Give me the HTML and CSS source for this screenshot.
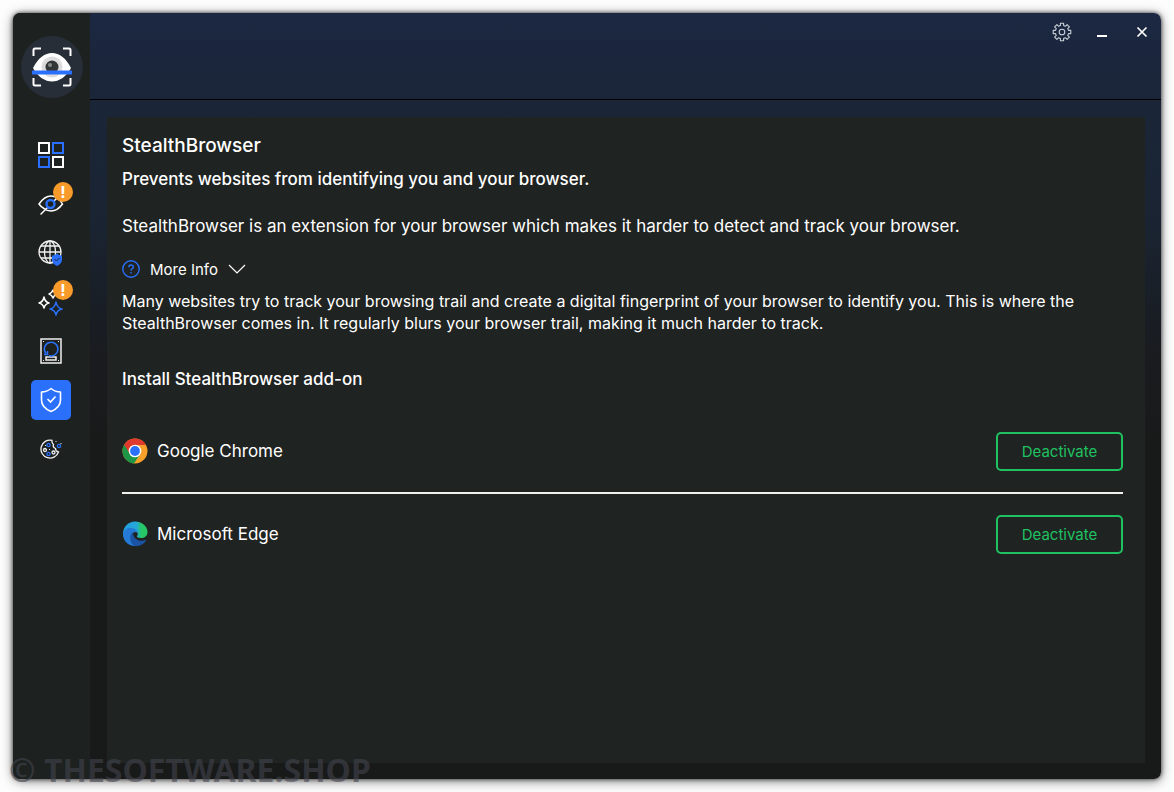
FILE: index.html
```html
<!DOCTYPE html>
<html lang="en">
<head>
    <meta charset="utf-8">
    <title>StealthBrowser</title>
    <meta name="viewport" content="width=device-width, initial-scale=1.0">
    <link rel="stylesheet" href="styles.css">
</head>
<body>
    <div class="window">
        <aside class="sidebar">
            <div class="logo">
                <svg width="40" height="40" viewBox="0 0 40 40" fill="none">
                    <path d="M1.5 9V3q0-1.500 1.500-1.500h6M31 1.500h6q1.500 0 1.500 1.500v6M38.500 31v6q0 1.500-1.500 1.500h-6M9 38.500H3q-1.500 0-1.500-1.500v-6" stroke="#fff" stroke-width="2"/>
                    <path d="M1 21C6 11 13 6 20 6s14 5 19 15c-5 9-12 13.500-19 13.500S6 30 1 21z" fill="#fff"/>
                    <circle cx="20" cy="20" r="10.500" fill="#dcdcdc"/>
                    <circle cx="20" cy="20" r="6.500" fill="#333637"/>
                    <circle cx="18" cy="18" r="2" fill="#858989"/>
                    <path d="M1 25.500h38" stroke="#2a70fb" stroke-width="4" stroke-linecap="round"/>
                </svg>
            </div>
            <nav class="menu">
                <button class="menu-item" aria-label="Dashboard">
                    <svg width="26" height="26" viewBox="0 0 26 26" fill="none" stroke-width="2">
                        <path d="M1 1h10v10H1zM15 15h10v10H15z" stroke="#fff"/>
                        <path d="M15 1h10v10H15zM1 15h10v10H1z" stroke="#2a70fb"/>
                    </svg>
                </button>
                <button class="menu-item" aria-label="Privacy">
                    <svg width="26" height="22" viewBox="0 0 26 22" fill="none" stroke-linecap="round">
                        <path d="M1 11q5.500-8 12-8 7 0 11.500 8-5 7-11.500 7-4 0-7-2.500Q3 14 1 11zM3 21l6-6M16 8l5-5" stroke="#fff" stroke-width="1.500"/>
                        <circle cx="12.500" cy="11" r="4" stroke="#2a70fb" stroke-width="2.400"/>
                    </svg>
                    <span class="badge">!</span>
                </button>
                <button class="menu-item" aria-label="Web protection">
                    <svg width="26" height="26" viewBox="0 0 26 26" fill="none">
                        <g stroke="#f2f2f2" stroke-width="1.300">
                            <circle cx="12" cy="12" r="11"/>
                            <ellipse cx="12" cy="12" rx="5.500" ry="11"/>
                            <path d="M12 1v22M1 12h22M3 6h18M3 18h18"/>
                        </g>
                        <path d="M14 15.500q3 0 5-2 2 2 5 2v4q0 4-5 6.500-5-2.500-5-6.500z" fill="#2a70fb"/>
                        <path d="m16.500 19 2 2 3-3" stroke="#1b2638"/>
                    </svg>
                </button>
                <button class="menu-item" aria-label="Clean up">
                    <svg width="26" height="28" viewBox="0 0 26 28" fill="none" stroke-width="1.500" stroke-linejoin="round">
                        <path d="M6 9q1 5 5 6-4 1-5 5-1-4-5-5 4-1 5-6zM15 2q1 3 4 4-3 1-4 4-1-3-4-4 3-1 4-4z" stroke="#fff"/>
                        <path d="M18 14q1 6 6 7-5 1-6 6-1-5-6-6 5-1 6-7z" stroke="#2a70fb"/>
                    </svg>
                    <span class="badge">!</span>
                </button>
                <button class="menu-item" aria-label="Disk">
                    <svg width="22" height="26" viewBox="0 0 22 26" fill="none">
                        <path d="M1 1h20v24H1zM6 19h10v3H6z" stroke="#eee" stroke-width="1.500"/>
                        <path d="M6 15.500A6.800 6.800 0 1 1 9 17.500M4 16.500h3.500V13" stroke="#2a70fb" stroke-width="1.500"/>
                        <path d="M3 3h1v1H3zM18 3h1v1h-1zM3 22h1v1H3zM18 22h1v1h-1z" fill="#eee"/>
                    </svg>
                </button>
                <button class="menu-item active" aria-label="StealthBrowser">
                    <svg width="22" height="26" viewBox="0 0 22 26" fill="none" stroke="#fff">
                        <path d="M11 1.500Q7 5 1.500 5v8q0 7.500 9.500 11.500 9.500-4 9.500-11.500V5Q15 5 11 1.500z" stroke-width="1.600" stroke-linejoin="round"/>
                        <path d="m7.500 12 3 3 5-5.500" stroke-width="1.600"/>
                    </svg>
                </button>
                <button class="menu-item" aria-label="Cookies">
                    <svg width="22" height="20" viewBox="0 0 22 20" fill="none" stroke-width="1.300">
                        <path d="M12 1.300A9 9 0 1 0 18.500 13q-3-.5-3-3.500-3-1-2-4-2-1.500-1.500-4.200z" stroke="#f2f2f2"/>
                        <g stroke="#f2f2f2"><circle cx="5" cy="11" r="1.500"/><circle cx="13.500" cy="13.500" r="1.500"/></g>
                        <g stroke="#2a70fb"><circle cx="8.500" cy="6" r="1.600"/><circle cx="8.500" cy="15" r="1.600"/><circle cx="19" cy="7" r="1.600"/></g>
                        <path d="M15.500 2h1v1h-1zM20.500 4h1v1h-1zM9 10h1v1H9zM5 6h1v1H5z" fill="#f2f2f2"/>
                    </svg>
                </button>
            </nav>
        </aside>
        <div class="main">
            <header class="titlebar">
                <button class="window-button" aria-label="Settings">
                    <svg width="20" height="20" viewBox="0 0 20 20" fill="none" stroke="#c9d0d8" stroke-width="1.100" stroke-linejoin="round">
                        <path d="M8.400 1.200h3.200v2.300l1.800.8 1.700-1.700 2.300 2.300-1.700 1.700.8 1.800h2.300v3.200h-2.300l-.8 1.800 1.700 1.700-2.300 2.300-1.700-1.700-1.800.8v2.300H8.400v-2.300l-1.800-.8-1.700 1.700-2.300-2.300 1.700-1.700-.8-1.800H1.200V8.400h2.300l.8-1.800-1.700-1.700 2.300-2.300 1.700 1.700 1.800-.8z"/>
                        <circle cx="10" cy="10" r="2.800"/>
                    </svg>
                </button>
                <button class="window-button" aria-label="Minimize">
                    <svg width="20" height="20" viewBox="0 0 20 20"><path d="M5 14h10" stroke="#fff" stroke-width="2"/></svg>
                </button>
                <button class="window-button" aria-label="Close">
                    <svg width="20" height="20" viewBox="0 0 20 20"><path d="m5.500 5.500 9 9m0-9-9 9" stroke="#fff" stroke-width="1.700"/></svg>
                </button>
            </header>
            <main class="panel">
                <h1>StealthBrowser</h1>
                <h2 class="subtitle">Prevents websites from identifying you and your browser.</h2>
                <p class="description">StealthBrowser is an extension for your browser which makes it harder to detect and track your browser.</p>
                <button class="more-info">
                    <svg width="18" height="18" viewBox="0 0 18 18" fill="none" stroke="#2a70fb" stroke-width="1.400">
                        <circle cx="9" cy="9" r="8.200"/>
                        <path d="M6.800 7.300q0-2.300 2.200-2.300 2.300 0 2.300 2 0 1.200-1.300 1.800-1 .5-1 1.900M9 12v1.500"/>
                    </svg>
                    <span>More Info</span>
                    <svg width="18" height="10" viewBox="0 0 18 10" fill="none" stroke="#fff" stroke-width="1.200"><path d="m1 1 8 8 8-8"/></svg>
                </button>
                <p class="details">Many websites try to track your browsing trail and create a digital fingerprint of your browser to identify you. This is where the StealthBrowser comes in. It regularly blurs your browser trail, making it much harder to track.</p>
                <h2 class="install-title">Install StealthBrowser add-on</h2>
                <ul class="browsers">
                    <li class="browser">
                        <svg width="26" height="26" viewBox="0 0 26 26">
                            <circle cx="13" cy="13" r="12.500" fill="#f7a12b"/>
                            <path d="M13 13 2.200 6.700A12.500 12.500 0 0 0 12 25.500l6.200-9.500z" fill="#1e9648"/>
                            <path d="M2.200 6.800A12.500 12.500 0 0 1 23.900 7H13l-5 9z" fill="#e0392e"/>
                            <circle cx="13" cy="13" r="6.300" fill="#fff"/>
                            <circle cx="13" cy="13" r="4.900" fill="#2a70fb"/>
                        </svg>
                        <span class="browser-name">Google Chrome</span>
                        <button class="deactivate">Deactivate</button>
                    </li>
                    <li class="browser">
                        <svg width="26" height="26" viewBox="0 0 26 26">
                            <defs>
                                <linearGradient id="edge-wave" x1="0" y1="0" x2="1" y2="0">
                                    <stop offset="0" stop-color="#249bdd"/>
                                    <stop offset=".55" stop-color="#25a8d8"/>
                                    <stop offset=".75" stop-color="#25c767"/>
                                </linearGradient>
                            </defs>
                            <path d="M1 13C1 5.500 6.500.5 13 .5S25.500 5 25.500 11c0 4-3 6-6.500 6-3 0-4.500-1-4-2 1-1 1-2 .5-3-1-2.500-5-3.500-8-2.500S2 12 1 17z" fill="url(#edge-wave)"/>
                            <path d="M1 13c1-5 5-6.500 8.500-6 4 .5 6.500 3 6 5-1.500-2-4-1-5 1-2 5 2 9 7 9-2 3-5.500 3.500-8 2.500C4 22.500 1 18.500 1 13z" fill="#247ad5"/>
                            <path d="M11 11c-4 3-4 11 2 14.200C18 25.500 22 23 24 19.500c.3-.6-.2-.8-.7-.5C18 21.500 10.500 18 11 11z" fill="#1b53a5"/>
                        </svg>
                        <span class="browser-name">Microsoft Edge</span>
                        <button class="deactivate">Deactivate</button>
                    </li>
                </ul>
            </main>
        </div>
    </div>
    <div class="watermark">© THESOFTWARE.SHOP</div>
</body>
</html>
```
FILE: styles.css
```css
* {
    margin: 0;
    padding: 0;
    box-sizing: border-box;
}

body {
    position: relative;
    min-height: 100vh;
    padding: 13px;
    display: flex;
    background: #fdfdfd;
    color: #fff;
    font-family: Inter, "Liberation Sans", sans-serif;
    font-size: 17px;
    overflow: hidden;
}

button {
    border: none;
    background: none;
    color: inherit;
    font: inherit;
    cursor: pointer;
}

svg {
    display: block;
    flex-shrink: 0;
}

.window {
    flex: 1;
    display: flex;
    border-radius: 7px;
    overflow: hidden;
    background: linear-gradient(#1c2742, #1a2537 100px, #1a2433 200px, #191b1e 350px, #181a19 450px);
    box-shadow: 0 0 4px rgba(0, 0, 0, 0.7), 0 2px 12px rgba(0, 0, 0, 0.5);
}

/* Sidebar */
.sidebar {
    width: 77px;
    flex-shrink: 0;
    background: #1d211f;
    padding-top: 23px;
}

.logo {
    width: 62px;
    height: 62px;
    margin-left: 8px;
    border-radius: 50%;
    background: #272e37;
    display: flex;
    align-items: center;
    justify-content: center;
}

.menu {
    margin-top: 37px;
    padding-left: 18px;
    display: flex;
    flex-direction: column;
    gap: 9px;
}

.menu-item {
    position: relative;
    width: 40px;
    height: 40px;
    border-radius: 5px;
    display: flex;
    align-items: center;
    justify-content: center;
}

.menu-item.active {
    background: #2a70fb;
}

.badge {
    position: absolute;
    top: -2px;
    right: -2px;
    width: 20px;
    height: 20px;
    border-radius: 50%;
    background: #f99b2b;
    font-size: 16px;
    font-weight: 700;
    line-height: 20px;
    text-align: center;
}

/* Content */
.main {
    flex: 1;
    min-width: 0;
    display: flex;
    flex-direction: column;
}

.titlebar {
    height: 87px;
    padding: 9px 9px 0;
    border-bottom: 1px solid #000;
    display: flex;
    justify-content: flex-end;
    align-items: flex-start;
    gap: 20px;
}

.window-button {
    width: 20px;
    height: 20px;
}

.panel {
    flex: 1;
    margin: 17px 16px 16px 17px;
    padding: 17px 22px 16px 15px;
    background: #1f2321;
}

h1 {
    font-size: 19px;
    font-weight: 500;
    line-height: 24px;
}

.subtitle,
.install-title {
    font-size: 17px;
    font-weight: 500;
    line-height: 24px;
}

.subtitle {
    margin-top: 9px;
}

.description {
    margin-top: 23px;
    line-height: 24px;
}

.more-info {
    margin-top: 20px;
    height: 22px;
    display: flex;
    align-items: center;
    gap: 10px;
    font-size: 15px;
}

.details {
    margin-top: 10px;
    font-size: 16px;
    line-height: 22px;
}

.install-title {
    margin-top: 33px;
}

.browsers {
    margin-top: 19px;
    list-style: none;
}

.browser {
    display: flex;
    align-items: center;
    gap: 9px;
    height: 82px;
}

.browser + .browser {
    border-top: 2px solid #f0f1ec;
}

.browser-name {
    flex: 1;
}

.deactivate {
    width: 127px;
    height: 39px;
    border: 2px solid #1fc161;
    border-radius: 5px;
    color: #1fc161;
    font-size: 15px;
}

.watermark {
    position: absolute;
    left: 9px;
    bottom: 2px;
    color: rgba(66, 68, 78, 0.6);
    font-family: "Noto Sans", sans-serif;
    font-size: 32px;
    font-weight: 700;
    line-height: 40px;
    pointer-events: none;
}
```
